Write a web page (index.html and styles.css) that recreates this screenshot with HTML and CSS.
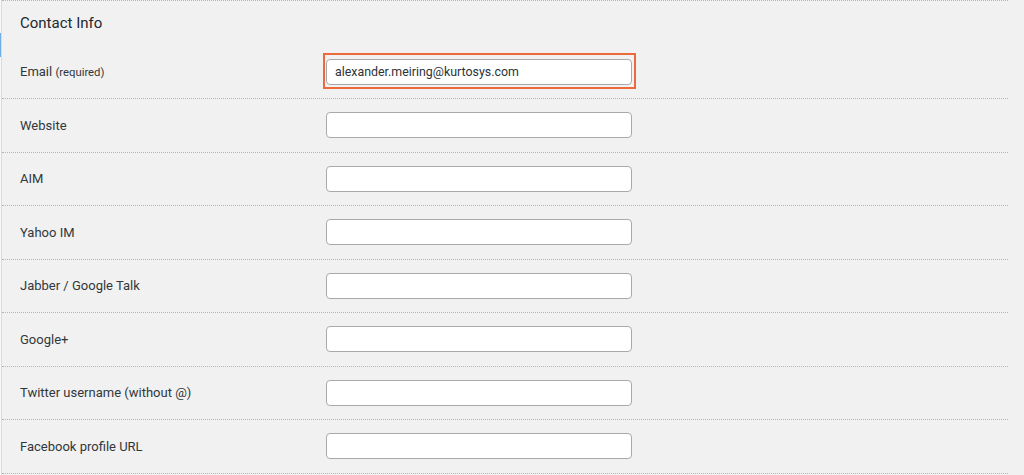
FILE: index.html
```html
<!DOCTYPE html>
<html lang="en">
  <head>
    <meta charset="UTF-8" />
    <title>Contact Info</title>
    <link rel="stylesheet" href="styles.css">
  </head>
  <body>
    <div class="page">
      <div class="edge">
        <div class="edge-mark"></div>
      </div>

      <div class="profile">
        <h2 class="section-title">Contact Info</h2>

        <div class="row">
          <label for="email">Email <span class="hint">(required)</span></label>
          <span class="highlight">
            <input type="text" id="email" value="alexander.meiring@kurtosys.com" />
          </span>
        </div>
        <div class="row">
          <label for="url">Website</label>
          <input type="text" id="url" />
        </div>
        <div class="row">
          <label for="aim">AIM</label>
          <input type="text" id="aim" />
        </div>
        <div class="row">
          <label for="yim">Yahoo IM</label>
          <input type="text" id="yim" />
        </div>
        <div class="row">
          <label for="jabber">Jabber / Google Talk</label>
          <input type="text" id="jabber" />
        </div>
        <div class="row">
          <label for="googleplus">Google+</label>
          <input type="text" id="googleplus" />
        </div>
        <div class="row">
          <label for="twitter">Twitter username (without @)</label>
          <input type="text" id="twitter" />
        </div>
        <div class="row">
          <label for="facebook">Facebook profile URL</label>
          <input type="text" id="facebook" />
        </div>
      </div>
    </div>
  </body>
</html>
```

FILE: styles.css
```css
* {
  font-family: Roboto, "Liberation Sans", sans-serif;
  box-sizing: border-box;
}

body {
  margin: 0;
  background-color: #f1f1f1;
  color: #2c3338;
  height: 475px;
  overflow: hidden;
}

.page {
  display: flex;
  min-height: 475px;
}

.edge {
  width: 2px;
  background: #f7f7f7;
  border-right: 1px solid #dcdcde;
}

.edge-mark {
  margin-top: 33px;
  width: 1px;
  height: 24px;
  background: #72aee6;
}

.profile {
  flex: 1;
  margin-right: 16px;
  border-top: 1px dotted #b4b4b4;
}

.section-title {
  margin: 0;
  height: 44px;
  padding: 13px 0 0 18px;
  font-size: 15px;
  font-weight: 400;
  line-height: 18px;
  color: #23282d;
}

.row {
  display: grid;
  grid-template-columns: 306px 306px;
  align-items: center;
  height: 53.5px;
  padding-left: 18px;
  border-bottom: 1px dotted #b4b4b4;
}

.row:first-of-type {
  height: 54px;
}

.row label {
  font-size: 13px;
  color: #32373c;
}

.hint {
  font-size: 11.3px;
}

.row input {
  display: block;
  width: 306px;
  height: 26px;
  margin: 0;
  padding: 0 8px;
  background: #fff;
  border: 1px solid #a7aaad;
  border-radius: 4px;
  font-size: 12.4px;
  color: #2c3338;
  outline: none;
}

/* orange annotation box around the email field */
.highlight {
  position: relative;
  display: block;
}

.highlight::after {
  content: "";
  position: absolute;
  top: -6px;
  bottom: -4px;
  left: -3px;
  right: -4px;
  border: 2px solid #ec6a3c;
}
```
